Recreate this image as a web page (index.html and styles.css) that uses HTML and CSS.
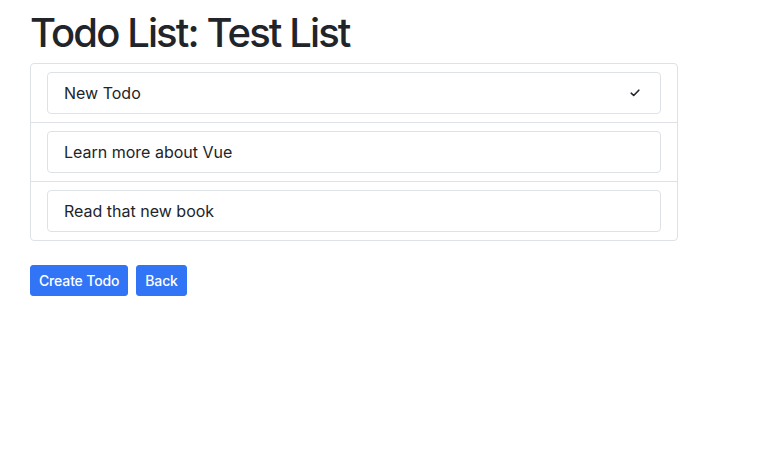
FILE: index.html
```html
<!DOCTYPE html>
<html>
<head>
<meta charset="utf-8">
<link rel="stylesheet" href="styles.css">
</head>
<body>
<div class="page">
  <h1 class="title">Todo List: Test List</h1>
  <ul class="list">
    <li class="item">
      <div class="field">
        <span class="field-text">New Todo</span>
        <svg class="check" width="10" height="8" viewBox="0 0 10 8"><path d="M1.2 4.2 L3.7 6.5 L8.8 1.2" fill="none" stroke="#212529" stroke-width="1.6" stroke-linecap="round" stroke-linejoin="round"/></svg>
      </div>
    </li>
    <li class="item"><div class="field"><span class="field-text">Learn more about Vue</span></div></li>
    <li class="item"><div class="field"><span class="field-text">Read that new book</span></div></li>
  </ul>
  <div class="actions">
    <button class="btn">Create Todo</button>
    <button class="btn">Back</button>
  </div>
</div>
</body>
</html>
```
FILE: styles.css
```css
body {
  margin: 0;
  font-family: Inter, "Liberation Sans", sans-serif;
  color: #212529;
  background: #fff;
}
.page {
  padding: 7px 30px;
  width: 648px;
}
.title {
  margin: 0 0 8px 0;
  font-size: 40px;
  font-weight: 500;
  line-height: 48px;
  letter-spacing: -1.9px;
  padding-top: 2px;
  height: 46px;
}
.list {
  list-style: none;
  margin: 0;
  padding: 0;
  border: 1px solid #dee2e6;
  border-radius: 4px;
}
.item {
  padding: 8px 16px;
  border-top: 1px solid #dee2e6;
}
.item:first-child {
  border-top: none;
}
.field {
  display: flex;
  align-items: center;
  justify-content: space-between;
  height: 24px;
  padding: 8px 16px;
  border: 1px solid #dee2e6;
  border-radius: 4px;
  font-size: 16px;
  line-height: 24px;
}
.check {
  margin-right: 4px;
}
.actions {
  display: flex;
  gap: 8px;
  margin-top: 24px;
}
.btn {
  font-family: Inter, "Liberation Sans", sans-serif;
  font-size: 14px;
  font-weight: 500;
  line-height: 21px;
  padding: 4px 8px;
  height: 31px;
  border: 1px solid #3174f6;
  background: #3174f6;
  color: #fff;
  border-radius: 3px;
  letter-spacing: -0.15px;
}
```
